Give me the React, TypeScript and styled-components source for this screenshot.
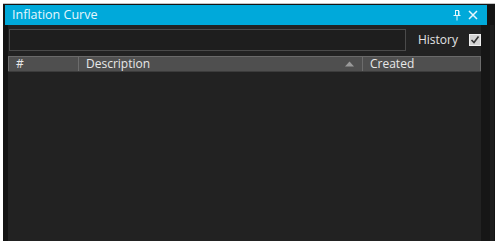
import React from "react";
import styled, { createGlobalStyle } from "styled-components";

const Global = createGlobalStyle`
  html, body { margin: 0; padding: 0; background: #ffffff; }
  body { font-family: "Open Sans", "Noto Sans", Arial, sans-serif; }
  * { box-sizing: border-box; }
`;

const Window = styled.div`
  margin: 3px 0 0 3px;
  width: 492px;
  height: 238px;
  background: #141414;
  border-top: 1px solid #c4c4c4;
  display: flex;
  flex-direction: column;
`;

const TitleBar = styled.div`
  margin: 1px 8px 0 2px;
  height: 20px;
  background: #00a9da;
  display: flex;
  align-items: center;
  padding: 0 9px 0 7px;
  color: #e6f7fd;
  font-size: 12.5px;
  flex-shrink: 0;
`;

const Title = styled.span`
  flex: 1;
  line-height: 20px;
`;

const TitleButtons = styled.div`
  display: flex;
  align-items: center;
  gap: 7px;
`;

const Main = styled.div`
  flex: 1;
  display: flex;
  min-height: 0;
`;

const Pane = styled.div`
  margin-left: 5px;
  width: 473px;
  background: #222222;
  display: flex;
  flex-direction: column;
`;

const RightEdge = styled.div`
  width: 9px;
  background: #161616;
`;

const ScrollEdge = styled.div`
  width: 4px;
  background: #1d1d1d;
`;

const Toolbar = styled.div`
  display: flex;
  align-items: center;
  padding: 4px 0 0 1px;
  height: 26px;
`;

const SearchBox = styled.div`
  width: 400px;
  height: 22px;
  border: 1px solid #4a4a4a;
  background: #1e1e1e;
`;

const Label = styled.span`
  margin-left: 12px;
  color: #e4e4e4;
  font-size: 12px;
  line-height: 22px;
`;

const Check = styled.div`
  margin-left: 11px;
  width: 12px;
  height: 12px;
  background: #d4d4d4;
  border: 1px solid #eeeeee;
  display: flex;
  align-items: center;
  justify-content: center;
`;

const Header = styled.div`
  margin-top: 5px;
  display: grid;
  grid-template-columns: 70px 284px 1fr;
  height: 16px;
  background: #4f4f4f;
  border-top: 1px solid #6a6a6a;
  border-bottom: 1px solid #3c3c3c;
`;

const HeaderCell = styled.div<{ $last?: boolean }>`
  display: flex;
  align-items: center;
  padding-left: ${(p) => (p.$first ? 6 : 7)}px;
  padding-right: 8px;
  color: #e8e8e8;
  font-size: 12px;
  line-height: 14px;
  border-left: 1px solid #6c6c6c;
  border-right: ${(p) => (p.$last ? "1px solid #6c6c6c" : "none")};
`;

const HeaderText = styled.span`
  flex: 1;
`;

const Body = styled.div`
  flex: 1;
`;

const PinIcon = () => (
  <svg width="8" height="11" viewBox="0 0 8 11">
    <path d="M2.5 0.5 V5 M5.5 0.5 V5 M2 0.5 H6" stroke="#e6f7fd" strokeWidth="1" fill="none" />
    <rect x="5" y="1" width="1.5" height="4" fill="#e6f7fd" />
    <path d="M0.5 5.5 H7.5" stroke="#e6f7fd" strokeWidth="1" />
    <path d="M4 6 V10.5" stroke="#e6f7fd" strokeWidth="1" />
  </svg>
);

const CloseIcon = () => (
  <svg width="10" height="10" viewBox="0 0 10 10">
    <path d="M1 1 L9 9 M9 1 L1 9" stroke="#e6f7fd" strokeWidth="1.5" />
  </svg>
);

const CheckMark = () => (
  <svg width="10" height="10" viewBox="0 0 10 10">
    <path d="M1.5 5 L4 7.5 L8.5 1.5" stroke="#333" strokeWidth="1.6" fill="none" />
  </svg>
);

const SortUp = () => (
  <svg width="9" height="6" viewBox="0 0 9 6">
    <path d="M0 5.5 L4.5 0.5 L9 5.5 Z" fill="#9a9a9a" />
  </svg>
);

export default function App() {
  return (
    <>
      <Global />
      <Window>
        <TitleBar>
          <Title>Inflation Curve</Title>
          <TitleButtons>
            <PinIcon />
            <CloseIcon />
          </TitleButtons>
        </TitleBar>
        <Main>
          <Pane>
            <Toolbar>
              <SearchBox />
              <Label>History</Label>
              <Check>
                <CheckMark />
              </Check>
            </Toolbar>
            <Header>
              <HeaderCell>
                <HeaderText>#</HeaderText>
              </HeaderCell>
              <HeaderCell>
                <HeaderText>Description</HeaderText>
                <SortUp />
              </HeaderCell>
              <HeaderCell $last>
                <HeaderText>Created</HeaderText>
              </HeaderCell>
            </Header>
            <Body />
          </Pane>
          <RightEdge />
          <ScrollEdge />
        </Main>
      </Window>
    </>
  );
}
